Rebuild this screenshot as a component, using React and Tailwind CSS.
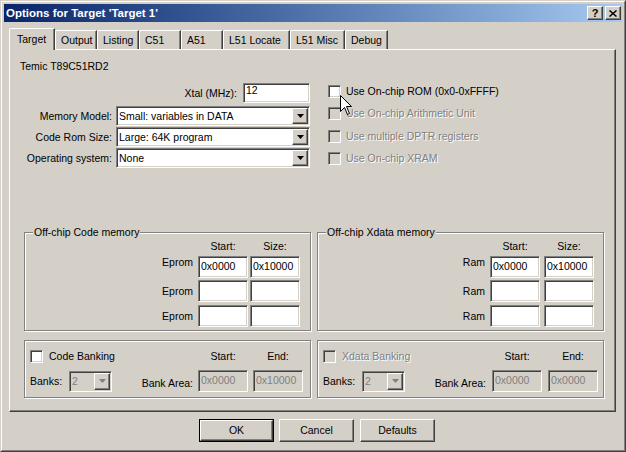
import React from "react";

const sunkenEdge =
  "border border-t-[#808080] border-l-[#808080] border-r-white border-b-white shadow-[inset_1px_1px_0_#404040,inset_-1px_-1px_0_#d4d0c8]";
const raisedEdge =
  "border border-t-white border-l-white border-r-[#404040] border-b-[#404040] shadow-[inset_-1px_-1px_0_#808080]";
const grayText = "text-[#808080] [text-shadow:1px_1px_0_#fff]";

function Field({ value = "", w = "w-[50px]", h = "h-[22px]", disabled }) {
  return (
    <div
      className={`${sunkenEdge} ${w} ${h} p-[1px] pl-[2px] flex items-center ${
        disabled ? "bg-[#d4d0c8] text-[#808080]" : "bg-white"
      }`}
    >
      <span className="-mt-[2px]">{value}</span>
    </div>
  );
}

function Arrow({ disabled }) {
  return (
    <svg width="7" height="4" viewBox="0 0 7 4">
      <path d="M0 0h7L3.5 4z" fill={disabled ? "#808080" : "#000"} />
    </svg>
  );
}

function Combo({ value, w = "w-[194px]", h = "h-[20px]", disabled }) {
  return (
    <div
      className={`${sunkenEdge} ${w} ${h} p-[1px] flex ${
        disabled ? "bg-[#d4d0c8]" : "bg-white"
      }`}
    >
      <span
        className={`flex-1 pl-[1px] flex items-center ${
          disabled ? "text-[#808080]" : ""
        }`}
      >
        {value}
      </span>
      <div
        className={`${raisedEdge} w-[16px] h-full bg-[#d4d0c8] flex items-center justify-center`}
      >
        <Arrow disabled={disabled} />
      </div>
    </div>
  );
}

function CheckBox({ disabled }) {
  return (
    <div
      className={`${sunkenEdge} w-[13px] h-[13px] shrink-0 ${
        disabled ? "bg-[#d4d0c8]" : "bg-white"
      }`}
    />
  );
}

function Tab({ label, w, active }) {
  if (active) {
    return (
      <div
        className={`relative z-10 ${w} h-[22px] bg-[#d4d0c8] border-l border-t border-r border-l-white border-t-white border-r-[#404040] rounded-tl-[2px] shadow-[inset_-1px_0_0_#808080] pl-[7px] pt-[4px]`}
      >
        {label}
      </div>
    );
  }
  return (
    <div
      className={`${w} h-[19px] mb-[1px] border-l border-t border-r border-l-white border-t-white border-r-[#404040] rounded-tl-[2px] shadow-[inset_-1px_0_0_#808080] pl-[5px] pt-[3px]`}
    >
      {label}
    </div>
  );
}

function GroupBox({ title, h, children }) {
  return (
    <div
      className={`relative w-[287px] ${h} border border-[#808080] shadow-[inset_1px_1px_0_#fff,1px_1px_0_#fff]`}
    >
      {title && (
        <span className="absolute left-[8px] -top-[7px] px-[1px] bg-[#d4d0c8]">
          {title}
        </span>
      )}
      {children}
    </div>
  );
}

function MemoryGroup({ title, label, gap, pr }) {
  const rows = [
    ["0x0000", "0x10000"],
    ["", ""],
    ["", ""],
  ];
  return (
    <GroupBox title={title} h="h-[99px]">
      <div className={`flex flex-col items-end ${pr}`}>
        <div className={`mt-[7px] h-[13px] flex ${gap}`}>
          <span className="w-[50px] text-center">Start:</span>
          <span className="w-[50px] text-center">Size:</span>
        </div>
        {rows.map((r, i) => (
          <div
            key={i}
            className={`flex items-center gap-[5px] ${
              i === 1 ? "mt-[2px]" : "mt-[3px]"
            }`}
          >
            <span className={i === 0 ? "self-start" : ""}>{label}</span>
            <div className={`flex ${gap}`}>
              <Field value={r[0]} />
              <Field value={r[1]} />
            </div>
          </div>
        ))}
      </div>
    </GroupBox>
  );
}

function BankGroup({ title, enabled, gap, pr, labelGap, end }) {
  return (
    <GroupBox h="h-[58px]">
      <div className={`flex flex-col pl-[5px] ${pr}`}>
        <div className="mt-[9px] h-[13px] flex items-center">
          <CheckBox disabled={!enabled} />
          <span className={`ml-[6px] ${enabled ? "" : grayText}`}>{title}</span>
          <div className={`ml-auto flex ${gap}`}>
            <span className="w-[50px] text-center">Start:</span>
            <span className="w-[50px] text-center">End:</span>
          </div>
        </div>
        <div className="mt-[7px] h-[22px] flex items-center">
          <span className="w-[39px]">Banks:</span>
          <Combo value="2" w="w-[43px]" h="h-[21px]" disabled />
          <span className={`ml-auto pt-[4px] ${labelGap}`}>Bank Area:</span>
          <div className={`flex ${gap}`}>
            <Field value="0x0000" disabled />
            <Field value={end} disabled />
          </div>
        </div>
      </div>
    </GroupBox>
  );
}

function Button({ label, isDefault }) {
  if (isDefault) {
    return (
      <div className="w-[75px] h-[23px] border border-black">
        <div className={`${raisedEdge} h-full flex items-center justify-center`}>
          {label}
        </div>
      </div>
    );
  }
  return (
    <div
      className={`${raisedEdge} w-[75px] h-[23px] flex items-center justify-center`}
    >
      {label}
    </div>
  );
}

export default function App() {
  const tabs = [
    ["Target", "w-[46px]"],
    ["Output", "w-[42px]"],
    ["Listing", "w-[42px]"],
    ["C51", "w-[42px]"],
    ["A51", "w-[42px]"],
    ["L51 Locate", "w-[67px]"],
    ["L51 Misc", "w-[55px]"],
    ["Debug", "w-[43px]"],
  ];

  return (
    <div className="relative w-[626px] h-[452px] bg-[#d4d0c8] border border-t-[#d4d0c8] border-l-[#d4d0c8] border-r-[#404040] border-b-[#404040] font-['Liberation_Sans',Arial,sans-serif] text-[10.5px] leading-[13px] text-black select-none">
      <div className="h-full border border-t-white border-l-white border-r-[#808080] border-b-[#808080] p-[2px] flex flex-col">
        {/* Title bar */}
        <div className="h-[18px] bg-linear-to-r from-[#0a246a] to-[#a6caf0] flex items-center justify-between pl-[2px] pr-[1px]">
          <span className="text-white font-bold text-[11.5px]">
            Options for Target 'Target 1'
          </span>
          <div className="flex gap-[2px]">
            <div
              className={`${raisedEdge} w-[16px] h-[14px] bg-[#d4d0c8] flex items-center justify-center font-bold text-[11px] leading-[11px]`}
            >
              ?
            </div>
            <div
              className={`${raisedEdge} w-[16px] h-[14px] bg-[#d4d0c8] flex items-center justify-center`}
            >
              <svg width="8" height="7" viewBox="0 0 8 7">
                <path d="M0.5 0.5L7.5 6.5M7.5 0.5L0.5 6.5" stroke="#000" strokeWidth="1.5" />
              </svg>
            </div>
          </div>
        </div>

        {/* Tabs */}
        <div className="mt-[6px] ml-[5px] h-[22px] flex items-end">
          {tabs.map(([label, w], i) => (
            <Tab key={label} label={label} w={w} active={i === 0} />
          ))}
        </div>

        {/* Tab page */}
        <div className="-mt-[1px] ml-[5px] w-[607px] h-[363px] border border-t-white border-l-white border-r-[#404040] border-b-[#404040] shadow-[inset_-1px_-1px_0_#808080] flex flex-col">
          <div className="mt-[10px] ml-[10px] h-[13px]">Temic T89C51RD2</div>

          <div className="mt-[7px] h-[90px] flex">
            <div className="w-[300px] pt-[3px] flex flex-col items-end">
              <div className="flex items-center gap-[6px]">
                <span>Xtal (MHz):</span>
                <div
                  className={`${sunkenEdge} w-[67px] h-[20px] bg-white p-[1px] pl-[2px] leading-[11px]`}
                >
                  12
                </div>
              </div>
              <div className="mt-[3px] flex items-center gap-[4px]">
                <span>Memory Model:</span>
                <Combo value="Small: variables in DATA" />
              </div>
              <div className="mt-[1px] flex items-center gap-[4px]">
                <span>Code Rom Size:</span>
                <Combo value="Large: 64K program" />
              </div>
              <div className="mt-[1px] flex items-center gap-[4px]">
                <span>Operating system:</span>
                <Combo value="None" />
              </div>
            </div>

            <div className="ml-[18px] flex flex-col">
              <div className="h-[22px] flex items-center gap-[5px]">
                <CheckBox />
                <span>Use On-chip ROM (0x0-0xFFFF)</span>
              </div>
              <div className="h-[23px] flex items-center gap-[5px]">
                <CheckBox disabled />
                <span className={grayText}>Use On-chip Arithmetic Unit</span>
              </div>
              <div className="h-[22px] flex items-center gap-[5px]">
                <CheckBox disabled />
                <span className={grayText}>Use multiple DPTR registers</span>
              </div>
              <div className="h-[23px] flex items-center gap-[5px]">
                <CheckBox disabled />
                <span className={grayText}>Use On-chip XRAM</span>
              </div>
            </div>
          </div>

          {/* Memory groups */}
          <div className="mt-[62px] ml-[14px] flex gap-[6px]">
            <MemoryGroup title="Off-chip Code memory" label="Eprom" gap="gap-[2px]" pr="pr-[10px]" />
            <MemoryGroup title="Off-chip Xdata memory" label="Ram" gap="gap-[4px]" pr="pr-[9px]" />
          </div>

          {/* Banking groups */}
          <div className="mt-[9px] ml-[14px] flex gap-[6px]">
            <BankGroup
              title="Code Banking"
              enabled
              gap="gap-[5px]"
              pr="pr-[7px]"
              labelGap="mr-[5px]"
              end="0x10000"
            />
            <BankGroup
              title="Xdata Banking"
              gap="gap-[6px]"
              pr="pr-[5px]"
              labelGap="mr-[6px]"
              end="0x0000"
            />
          </div>
        </div>

        {/* Dialog buttons */}
        <div className="mt-[7px] ml-[195px] flex">
          <Button label="OK" isDefault />
          <div className="ml-[5px]">
            <Button label="Cancel" />
          </div>
          <div className="ml-[6px]">
            <Button label="Defaults" />
          </div>
        </div>
      </div>

      {/* Mouse pointer */}
      <svg
        className="absolute left-[339px] top-[94px]"
        width="13"
        height="21"
        viewBox="0 0 13 21"
      >
        <path
          d="M0.5 0.5V16.5L4.5 12.5L7.5 19.5L9.5 18.5L6.5 11.5H11.5Z"
          fill="#fff"
          stroke="#000"
          strokeWidth="1"
        />
      </svg>
    </div>
  );
}
